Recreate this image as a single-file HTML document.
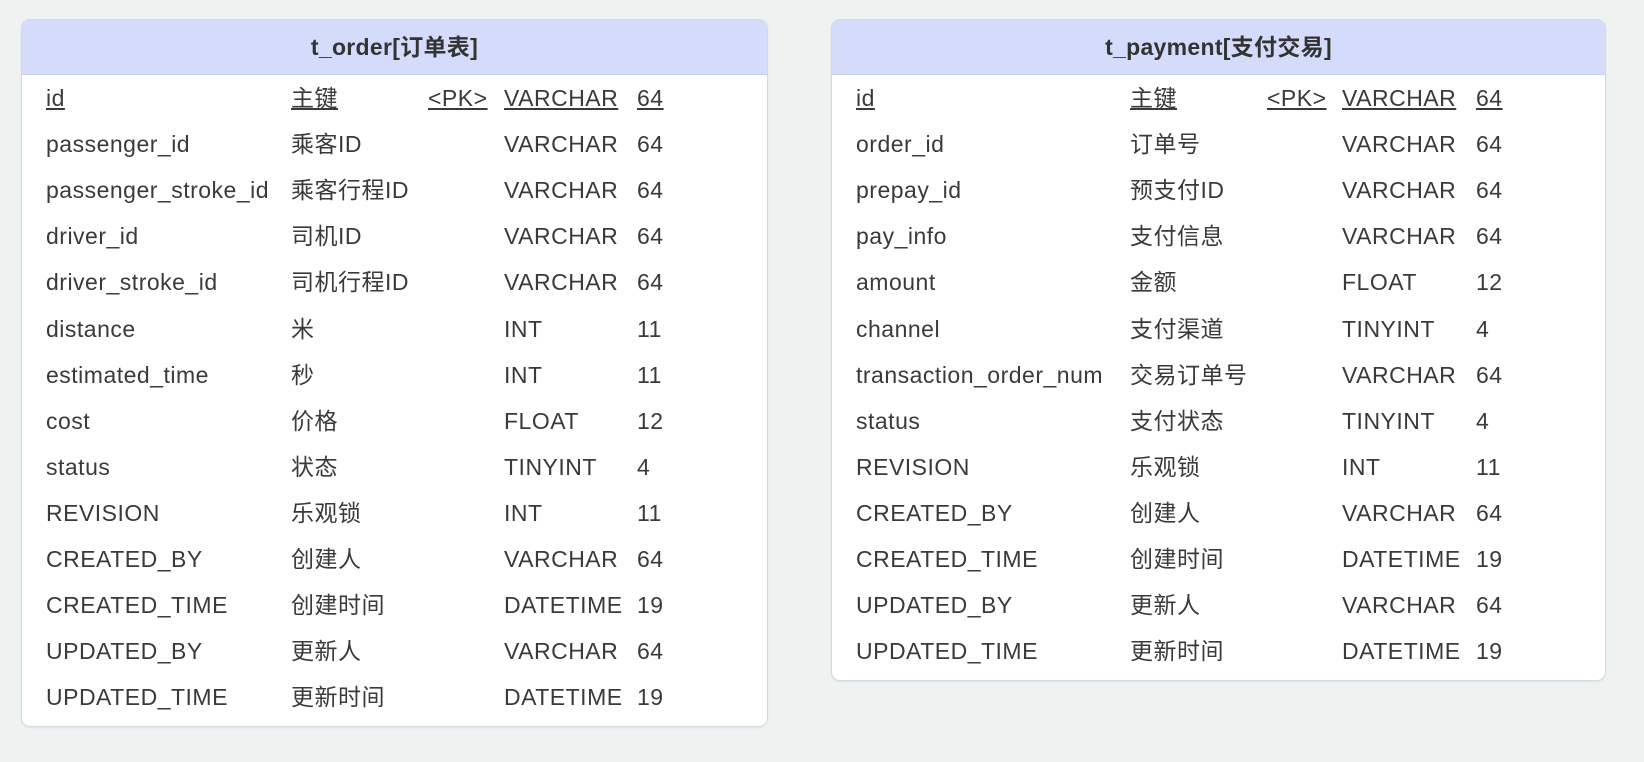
<!DOCTYPE html>
<html><head><meta charset="utf-8"><style>
body{margin:0;width:1644px;height:762px;background:#eef3f2;font-family:"Liberation Sans","Noto Sans CJK SC",sans-serif;color:#3a3a3a;position:relative;overflow:hidden}
.card{position:absolute;background:#fff;border:1px solid #d3d9e0;border-radius:9px;overflow:hidden;box-shadow:0 1px 2px rgba(0,0,0,.06)}
.hd{height:54px;background:#d5dcfb;border-bottom:1px solid #c8d0ee;text-align:center;line-height:54px;font-weight:bold;font-size:23px;color:#333;letter-spacing:0.3px}
.r{position:absolute;left:0;right:0;height:46px;line-height:46px;font-size:23px;letter-spacing:0.5px}
.r span{position:absolute;white-space:nowrap}
.u span{text-decoration:underline}
</style></head><body>
<div class="card" style="left:21px;top:19px;width:745px;height:706px">
<div class="hd">t_order[订单表]</div>
</div>
<div class="card" style="left:831px;top:19px;width:773px;height:660px">
<div class="hd">t_payment[支付交易]</div>
</div>
<div id="L"></div><div id="R"></div>
<script>
function build(rows,x0,cols,id){
 var h='';
 rows.forEach(function(r,i){
  var top=75+i*46.1;
  h+='<div class="r'+(i==0?' u':'')+'" style="top:'+top+'px;left:0;width:1644px">';
  r.forEach(function(c,j){ if(c) h+='<span style="left:'+cols[j]+'px">'+c+'</span>';});
  h+='</div>';
 });
 document.getElementById(id).innerHTML=h;
}
build([
["id","主键","&lt;PK&gt;","VARCHAR","64"],
["passenger_id","乘客ID","","VARCHAR","64"],
["passenger_stroke_id","乘客行程ID","","VARCHAR","64"],
["driver_id","司机ID","","VARCHAR","64"],
["driver_stroke_id","司机行程ID","","VARCHAR","64"],
["distance","米","","INT","11"],
["estimated_time","秒","","INT","11"],
["cost","价格","","FLOAT","12"],
["status","状态","","TINYINT","4"],
["REVISION","乐观锁","","INT","11"],
["CREATED_BY","创建人","","VARCHAR","64"],
["CREATED_TIME","创建时间","","DATETIME","19"],
["UPDATED_BY","更新人","","VARCHAR","64"],
["UPDATED_TIME","更新时间","","DATETIME","19"]
],0,[46,291,428,504,637],"L");
build([
["id","主键","&lt;PK&gt;","VARCHAR","64"],
["order_id","订单号","","VARCHAR","64"],
["prepay_id","预支付ID","","VARCHAR","64"],
["pay_info","支付信息","","VARCHAR","64"],
["amount","金额","","FLOAT","12"],
["channel","支付渠道","","TINYINT","4"],
["transaction_order_num","交易订单号","","VARCHAR","64"],
["status","支付状态","","TINYINT","4"],
["REVISION","乐观锁","","INT","11"],
["CREATED_BY","创建人","","VARCHAR","64"],
["CREATED_TIME","创建时间","","DATETIME","19"],
["UPDATED_BY","更新人","","VARCHAR","64"],
["UPDATED_TIME","更新时间","","DATETIME","19"]
],0,[856,1130,1267,1342,1476],"R");
</script>
</body></html>
